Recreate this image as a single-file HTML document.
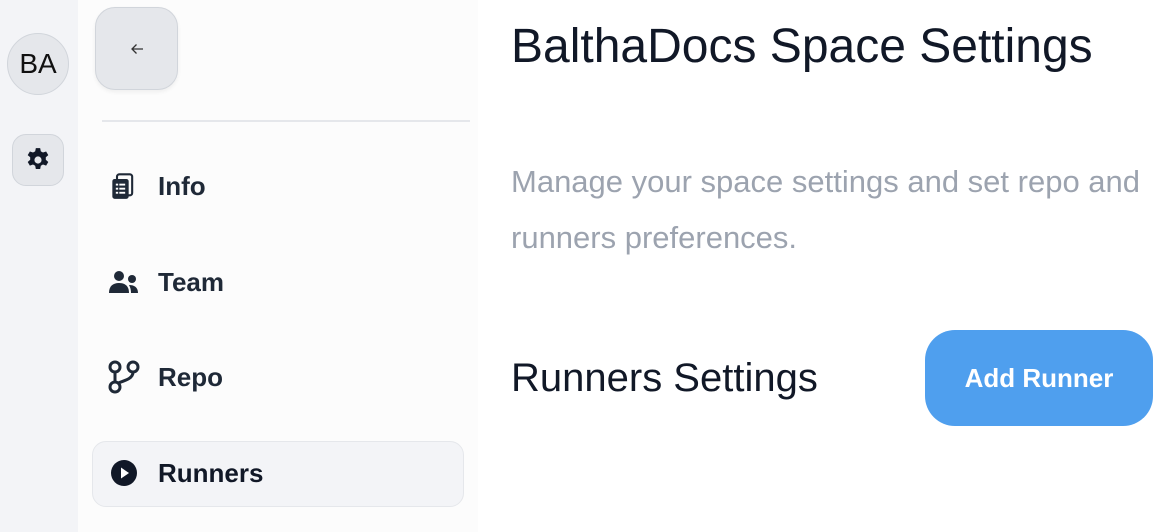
<!DOCTYPE html>
<html><head><style>
*{margin:0;padding:0;box-sizing:border-box}
body{width:1164px;height:532px;overflow:hidden;font-family:"Liberation Sans",sans-serif;background:#fff;position:relative;color:#111827}
.rail{position:absolute;left:0;top:0;width:78px;height:532px;background:#f3f4f7}
.av{position:absolute;left:7px;top:33px;width:62px;height:62px;border-radius:50%;background:#e5e7eb;border:1.5px solid #d1d5db;display:flex;align-items:center;justify-content:center;font-size:28px;color:#111}
.gear{position:absolute;left:12px;top:134px;width:52px;height:52px;border-radius:14px;background:#e5e7eb;border:1.5px solid #d1d5db;display:flex;align-items:center;justify-content:center}
.side{position:absolute;left:78px;top:0;width:400px;height:532px;background:#fcfcfc}
.back{position:absolute;left:95px;top:7px;width:83px;height:83px;border-radius:20px;background:#e5e7eb;border:1.5px solid #d1d5db;box-shadow:0 2px 4px rgba(0,0,0,.06);display:flex;align-items:center;justify-content:center}
.div{position:absolute;left:102px;top:120px;width:368px;height:2px;background:#e5e7eb}
.nav{position:absolute;left:108px;height:40px;display:flex;align-items:center;font-size:26px;font-weight:bold;color:#1f2937}
.nav svg{width:32px;margin-right:18px}
.act{position:absolute;left:92px;top:441px;width:372px;height:66px;border-radius:14px;background:#f3f4f7;border:1.5px solid #e5e7eb}
h1{position:absolute;left:511px;top:19px;font-size:48px;font-weight:normal;color:#111827;letter-spacing:0px;white-space:nowrap}
.sub{position:absolute;left:511px;top:154px;width:650px;font-size:31px;line-height:56px;color:#9ca3af;white-space:nowrap}
h2{position:absolute;left:511px;top:356px;font-size:40px;font-weight:normal;color:#111827;white-space:nowrap}
.btn{position:absolute;left:925px;top:330px;width:228px;height:96px;border-radius:30px;background:#4f9fee;color:#fff;font-size:26px;font-weight:bold;display:flex;align-items:center;justify-content:center}
</style></head><body>
<div class="rail"></div>
<div class="av">BA</div>
<div class="gear"><svg width="26" height="26" viewBox="0 0 24 24"><path fill="#111827" d="M10 1h4l.6 3 2 1.1 2.9-1 2 3.4-2.3 2v2.3l2.3 2-2 3.4-2.9-1-2 1.1-.6 3h-4l-.6-3-2-1.1-2.9 1-2-3.4 2.3-2V9.5L2.5 7.5l2-3.4 2.9 1 2-1.1z"/><circle cx="12" cy="12" r="3.3" fill="#e5e7eb"/></svg></div>
<div class="side"></div>
<div class="back"><svg width="14" height="12" viewBox="0 0 14 12"><path d="M13 6H2M6.5 1.5L2 6l4.5 4.5" fill="none" stroke="#333" stroke-width="1.3"/></svg></div>
<div class="div"></div>
<div class="act"></div>
<div class="nav" style="top:166px"><svg viewBox="0 0 24 24" height="28"><rect x="6" y="2" width="13" height="18" rx="2" fill="none" stroke="#1f2937" stroke-width="1.8"/><rect x="2" y="6" width="14" height="17" rx="2" fill="#1f2937"/><g fill="#fff"><rect x="5" y="10" width="2" height="1.6"/><rect x="8" y="10" width="5" height="1.6"/><rect x="5" y="13.5" width="2" height="1.6"/><rect x="8" y="13.5" width="5" height="1.6"/><rect x="5" y="17" width="2" height="1.6"/><rect x="8" y="17" width="5" height="1.6"/></g></svg>Info</div>
<div class="nav" style="top:262px"><svg viewBox="0 0 32 24" height="24"><circle cx="11" cy="6" r="5" fill="#1f2937"/><path d="M1 23c0-7 4-10 10-10s10 3 10 10z" fill="#1f2937"/><circle cx="24" cy="9" r="4" fill="#1f2937"/><path d="M21 15c5 0 9 2 9 8h-7c0-4-1-6-2-8z" fill="#1f2937"/></svg>Team</div>
<div class="nav" style="top:357px"><svg viewBox="0 0 32 34" height="34"><g fill="none" stroke="#1f2937" stroke-width="3"><circle cx="7" cy="7" r="5"/><circle cx="25" cy="7" r="5"/><circle cx="7" cy="27" r="5"/><path d="M7 12v10M25 12c0 6-6 8-15 11"/></g></svg>Repo</div>
<div class="nav" style="top:453px;color:#111827"><svg viewBox="0 0 28 28" height="28"><circle cx="14" cy="14" r="13" fill="#111827"/><path d="M11 8.5l8 5.5-8 5.5z" fill="#fff"/></svg>Runners</div>
<h1>BalthaDocs Space Settings</h1>
<div class="sub">Manage your space settings and set repo and<br>runners preferences.</div>
<h2>Runners Settings</h2>
<div class="btn">Add Runner</div>
</body></html>
